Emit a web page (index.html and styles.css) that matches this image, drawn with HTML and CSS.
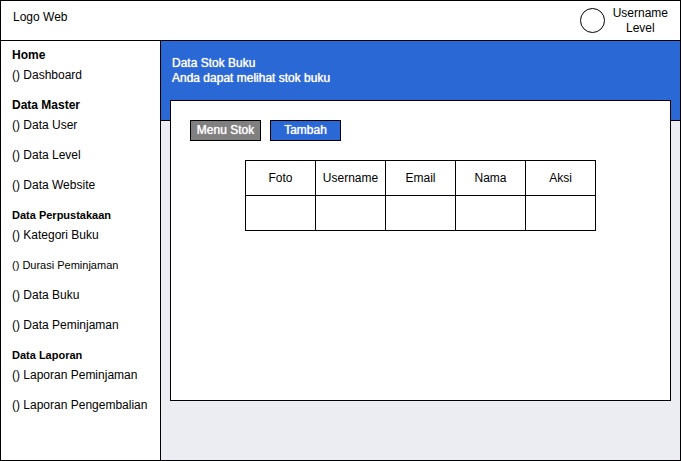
FILE: index.html
```html
<!DOCTYPE html>
<html lang="id">
<head>
<meta charset="utf-8">
<meta name="viewport" content="width=device-width, initial-scale=1">
<title>Data Stok Buku</title>
<link rel="stylesheet" href="styles.css">
</head>
<body>
<div class="app">
  <header class="topbar">
    <a class="logo" href="#">Logo Web</a>
    <div class="account">
      <svg class="avatar" viewBox="0 0 25 25" aria-hidden="true"><circle cx="12.5" cy="12.5" r="12" fill="#fff" stroke="#000"/></svg>
      <div class="account-text">Username<br>Level</div>
    </div>
  </header>
  <div class="body">
    <nav class="sidebar">
      <section>
        <h2>Home</h2>
        <ul>
          <li><a href="#">() Dashboard</a></li>
        </ul>
      </section>
      <section>
        <h2>Data Master</h2>
        <ul>
          <li><a href="#">() Data User</a></li>
          <li><a href="#">() Data Level</a></li>
          <li><a href="#">() Data Website</a></li>
        </ul>
      </section>
      <section>
        <h2 class="small">Data Perpustakaan</h2>
        <ul>
          <li><a href="#">() Kategori Buku</a></li>
          <li class="small"><a href="#">() Durasi Peminjaman</a></li>
          <li><a href="#">() Data Buku</a></li>
          <li><a href="#">() Data Peminjaman</a></li>
        </ul>
      </section>
      <section>
        <h2 class="small">Data Laporan</h2>
        <ul>
          <li><a href="#">() Laporan Peminjaman</a></li>
          <li><a href="#">() Laporan Pengembalian</a></li>
        </ul>
      </section>
    </nav>
    <main class="main">
      <div class="banner">
        <h1>Data Stok Buku</h1>
        <p>Anda dapat melihat stok buku</p>
      </div>
      <div class="card">
        <div class="actions">
          <button type="button" class="btn btn-muted">Menu Stok</button>
          <button type="button" class="btn">Tambah</button>
        </div>
        <table class="stock">
          <thead>
            <tr><th scope="col">Foto</th><th scope="col">Username</th><th scope="col">Email</th><th scope="col">Nama</th><th scope="col">Aksi</th></tr>
          </thead>
          <tbody>
            <tr><td></td><td></td><td></td><td></td><td></td></tr>
          </tbody>
        </table>
      </div>
    </main>
  </div>
</div>
</body>
</html>
```
FILE: styles.css
```css
* {
  box-sizing: border-box;
}

body {
  margin: 0;
  font: 12px/15px "Liberation Sans", Arial, sans-serif;
  color: #000;
}

h1, h2, p, ul {
  margin: 0;
  padding: 0;
  font-size: inherit;
}

ul {
  list-style: none;
}

a {
  color: inherit;
  text-decoration: none;
}

.app {
  display: flex;
  flex-direction: column;
  min-height: 100vh;
  border: 1px solid #000;
  background: #fff;
}

.topbar {
  display: flex;
  justify-content: space-between;
  align-items: flex-start;
  padding: 5px 12px 4px;
  border-bottom: 1px solid #000;
}

.logo {
  padding-top: 4px;
}

.account {
  display: flex;
  gap: 8px;
}

.account-text {
  text-align: center;
}

.avatar {
  width: 25px;
  height: 25px;
  margin-top: 2px;
}

.body {
  display: flex;
  flex: 1;
}

.sidebar {
  display: flex;
  flex: none;
  flex-direction: column;
  gap: 10px;
  width: 160px;
  padding: 4px 0 4px 11px;
  border-right: 1px solid #000;
  line-height: 20px;
}

.sidebar ul {
  display: grid;
  gap: 10px;
}

.sidebar .small {
  font-size: 11px;
}

.main {
  display: flex;
  flex: 1;
  flex-direction: column;
  background: #ebedf3;
}

.banner {
  height: 80px;
  padding: 15px 11px;
  border-bottom: 1px solid #000;
  background: #2a68d6;
  color: #fff;
  text-shadow: 0 0 1px #fff;
}

.banner h1 {
  font-weight: normal;
}

.card {
  flex: 1;
  margin: -21px 9px 59px;
  padding: 19px;
  border: 1px solid #000;
  background: #fff;
}

.actions {
  display: flex;
  gap: 9px;
  margin-bottom: 19px;
}

.btn {
  width: 71px;
  height: 21px;
  padding: 0;
  border: 1px solid #000;
  background: #2a68d6;
  color: #fff;
  font: 12px/15px "Liberation Sans", Arial, sans-serif;
  text-shadow: 0 0 1px #fff;
}

.btn-muted {
  background: #808080;
}

.stock {
  width: 351px;
  margin: 0 auto;
  border-collapse: collapse;
  table-layout: fixed;
}

.stock th,
.stock td {
  height: 35px;
  padding: 0;
  border: 1px solid #000;
  font-weight: normal;
  text-align: center;
}
```
